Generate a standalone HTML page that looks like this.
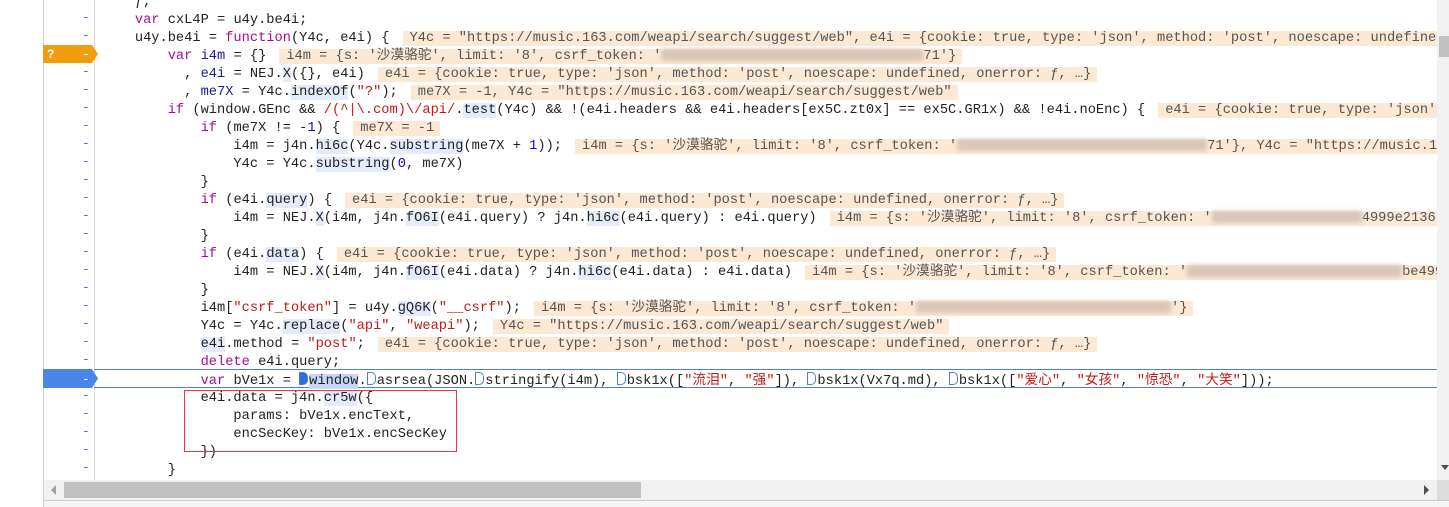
<!DOCTYPE html>
<html><head><meta charset="utf-8"><style>
html,body{margin:0;padding:0;background:#fff;width:1449px;height:507px;overflow:hidden;position:relative}
.gut{position:absolute;left:43px;top:0;width:50px;height:480px;border-left:1px solid #cfcfcf;border-right:1px solid #dadada;background:#fff}
.code{position:absolute;left:94px;top:0;width:1343px;height:480px;overflow:hidden}
.lines{position:absolute;left:8px;top:-6px}
.l{height:18px;line-height:18px;white-space:pre;font-family:"Liberation Mono","Noto Sans CJK SC",monospace;font-size:13.7px;color:#222}
.k{color:#aa0d91}.d{color:#1a1aa6}.n{color:#1c00cf}.s{color:#c41a16}
.p{background:#e4ebfb}
.a{background:#fde8d4;color:#555;margin-left:13px;padding:0 6px 0 7px}
.b{display:inline-block;height:12px;vertical-align:middle;background:#d8c6b8;filter:blur(2.5px)}
.dash{position:absolute;left:82px;font:13px "Liberation Mono",monospace;color:#4a78c8;line-height:18px;width:12px}
.mk{display:inline-block;width:7px;height:11px;border:1px solid #4a7fe0;border-right:none;border-radius:0 5px 5px 0;border-right:1px solid #4a7fe0;vertical-align:-1px;margin-right:1px}
.mk.f{background:#2f6ee0}
</style></head><body>
<div class="gut"></div>
<div id="dashes"></div>
<svg style="position:absolute;left:43px;top:45px" width="56" height="18"><path d="M0 0H49L55 9L49 18H0Z" fill="#f29c10"/><text x="4" y="13" font-family="Liberation Sans" font-size="12" font-weight="bold" fill="#fff">?</text><text x="39" y="13" font-family="Liberation Mono" font-size="13" fill="#fff">-</text></svg>
<div style="position:absolute;left:94px;top:369px;width:1343px;height:17px;border-top:1px solid #4a7fe0;border-bottom:1px solid #4a7fe0"></div>
<svg style="position:absolute;left:43px;top:369px" width="56" height="19"><path d="M0 0H49L55 9.5L49 19H0Z" fill="#4a86ea"/><text x="39" y="14" font-family="Liberation Mono" font-size="13" fill="#fff">-</text></svg>
<div class="code"><div class="lines">
<div class="l">    ƒ,</div>
<div class="l">    <span class="k">var</span> cxL4P = u4y.be4i;</div>
<div class="l">    u4y.be4i = <span class="k">function</span>(Y4c, e4i) {<span class="a">Y4c = "https://music.163.com/weapi/search/suggest/web", e4i = {cookie: true, type: 'json', method: 'post', noescape: undefined, onerror: ƒ, …}</span></div>
<div class="l">        <span class="k">var</span> <span class="d">i4m</span> = {}<span class="a">i4m = {s: '沙漠骆驼', limit: '8', csrf_token: '<span class="b" style="width:262px"></span>71'}</span></div>
<div class="l">          , <span class="d">e4i</span> = NEJ.<span class="p">X</span>({}, e4i)<span class="a">e4i = {cookie: true, type: 'json', method: 'post', noescape: undefined, onerror: ƒ, …}</span></div>
<div class="l">          , <span class="d">me7X</span> = Y4c.<span class="p">indexOf</span>(<span class="s">"?"</span>);<span class="a">me7X = -1, Y4c = "https://music.163.com/weapi/search/suggest/web"</span></div>
<div class="l">        <span class="k">if</span> (window.GEnc &amp;&amp; <span class="s">/(^|\.com)\/api/</span>.<span class="p">test</span>(Y4c) &amp;&amp; !(e4i.headers &amp;&amp; e4i.headers[ex5C.zt0x] == ex5C.GR1x) &amp;&amp; !e4i.noEnc) {<span class="a">e4i = {cookie: true, type: 'json', method: 'post'</span></div>
<div class="l">            <span class="k">if</span> (me7X != -<span class="n">1</span>) {<span class="a">me7X = -1</span></div>
<div class="l">                i4m = j4n.<span class="p">hi6c</span>(Y4c.<span class="p">substring</span>(me7X + <span class="n">1</span>));<span class="a">i4m = {s: '沙漠骆驼', limit: '8', csrf_token: '<span class="b" style="width:250px"></span>71'}, Y4c = "https://music.163.com/weapi/search/suggest/web"</span></div>
<div class="l">                Y4c = Y4c.<span class="p">substring</span>(<span class="n">0</span>, me7X)</div>
<div class="l">            }</div>
<div class="l">            <span class="k">if</span> (e4i.<span class="p">query</span>) {<span class="a">e4i = {cookie: true, type: 'json', method: 'post', noescape: undefined, onerror: ƒ, …}</span></div>
<div class="l">                i4m = NEJ.<span class="p">X</span>(i4m, j4n.<span class="p">fO6I</span>(e4i.query) ? j4n.<span class="p">hi6c</span>(e4i.query) : e4i.query)<span class="a">i4m = {s: '沙漠骆驼', limit: '8', csrf_token: '<span class="b" style="width:150px"></span>4999e2136'}</span></div>
<div class="l">            }</div>
<div class="l">            <span class="k">if</span> (e4i.<span class="p">data</span>) {<span class="a">e4i = {cookie: true, type: 'json', method: 'post', noescape: undefined, onerror: ƒ, …}</span></div>
<div class="l">                i4m = NEJ.<span class="p">X</span>(i4m, j4n.<span class="p">fO6I</span>(e4i.data) ? j4n.<span class="p">hi6c</span>(e4i.data) : e4i.data)<span class="a">i4m = {s: '沙漠骆驼', limit: '8', csrf_token: '<span class="b" style="width:215px"></span>be4999e2136'}</span></div>
<div class="l">            }</div>
<div class="l">            i4m[<span class="s">"csrf_token"</span>] = u4y.<span class="p">gQ6K</span>(<span class="s">"__csrf"</span>);<span class="a">i4m = {s: '沙漠骆驼', limit: '8', csrf_token: '<span class="b" style="width:255px"></span>'}</span></div>
<div class="l">            Y4c = Y4c.<span class="p">replace</span>(<span class="s">"api"</span>, <span class="s">"weapi"</span>);<span class="a">Y4c = "https://music.163.com/weapi/search/suggest/web"</span></div>
<div class="l">            <span class="p">e4i</span>.method = <span class="s">"post"</span>;<span class="a">e4i = {cookie: true, type: 'json', method: 'post', noescape: undefined, onerror: ƒ, …}</span></div>
<div class="l">            <span class="k">delete</span> e4i.query;</div>
<div class="l">            <span class="k">var</span> bVe1x = <span class="mk f"></span><span style="background:#c6d6f6">window</span>.<span class="mk"></span>asrsea(JSON.<span class="mk"></span>stringify(i4m), <span class="mk"></span>bsk1x([<span class="s">"流泪"</span>, <span class="s">"强"</span>]), <span class="mk"></span>bsk1x(Vx7q.md), <span class="mk"></span>bsk1x([<span class="s">"爱心"</span>, <span class="s">"女孩"</span>, <span class="s">"惊恐"</span>, <span class="s">"大笑"</span>]));</div>
<div class="l">            e4i.data = j4n.<span class="p">cr5w</span>({</div>
<div class="l">                params: bVe1x.encText,</div>
<div class="l">                encSecKey: bVe1x.encSecKey</div>
<div class="l">            })</div>
<div class="l">        }</div>
</div></div>
<div style="position:absolute;left:184px;top:390px;width:271px;height:60px;border:1px solid #e53935"></div>
<div style="position:absolute;left:1437px;top:0;width:12px;height:480px;background:#f1f1f1"></div>
<div style="position:absolute;left:1439px;top:36px;width:10px;height:21px;background:#c1c1c1"></div>
<svg style="position:absolute;left:1441px;top:465px" width="8" height="6"><path d="M0 0H8L4 5Z" fill="#505050"/></svg>
<div style="position:absolute;left:43px;top:480px;width:1394px;height:20px;background:#f1f1f1;border-left:1px solid #cfcfcf"></div>
<div style="position:absolute;left:64px;top:482px;width:577px;height:16px;background:#c1c1c1"></div>
<svg style="position:absolute;left:50px;top:484px" width="8" height="12"><path d="M6 1V11L1 6Z" fill="#a0a0a0"/></svg>
<svg style="position:absolute;left:1423px;top:484px" width="8" height="12"><path d="M1 1V11L6 6Z" fill="#505050"/></svg>
<div style="position:absolute;left:1437px;top:480px;width:12px;height:20px;background:#dcdcdc"></div>
<div style="position:absolute;left:43px;top:500px;width:1406px;height:7px;background:#f5f5f5;border-top:1px solid #cfcfcf;border-left:1px solid #cfcfcf"></div>
<script>
var h='';for(var i=0;i<27;i++){var t=-9+18*i;if(i==3||i==21)continue;h+='<div class="dash" style="top:'+t+'px">-</div>';}
document.getElementById('dashes').innerHTML=h;
</script>
</body></html>
